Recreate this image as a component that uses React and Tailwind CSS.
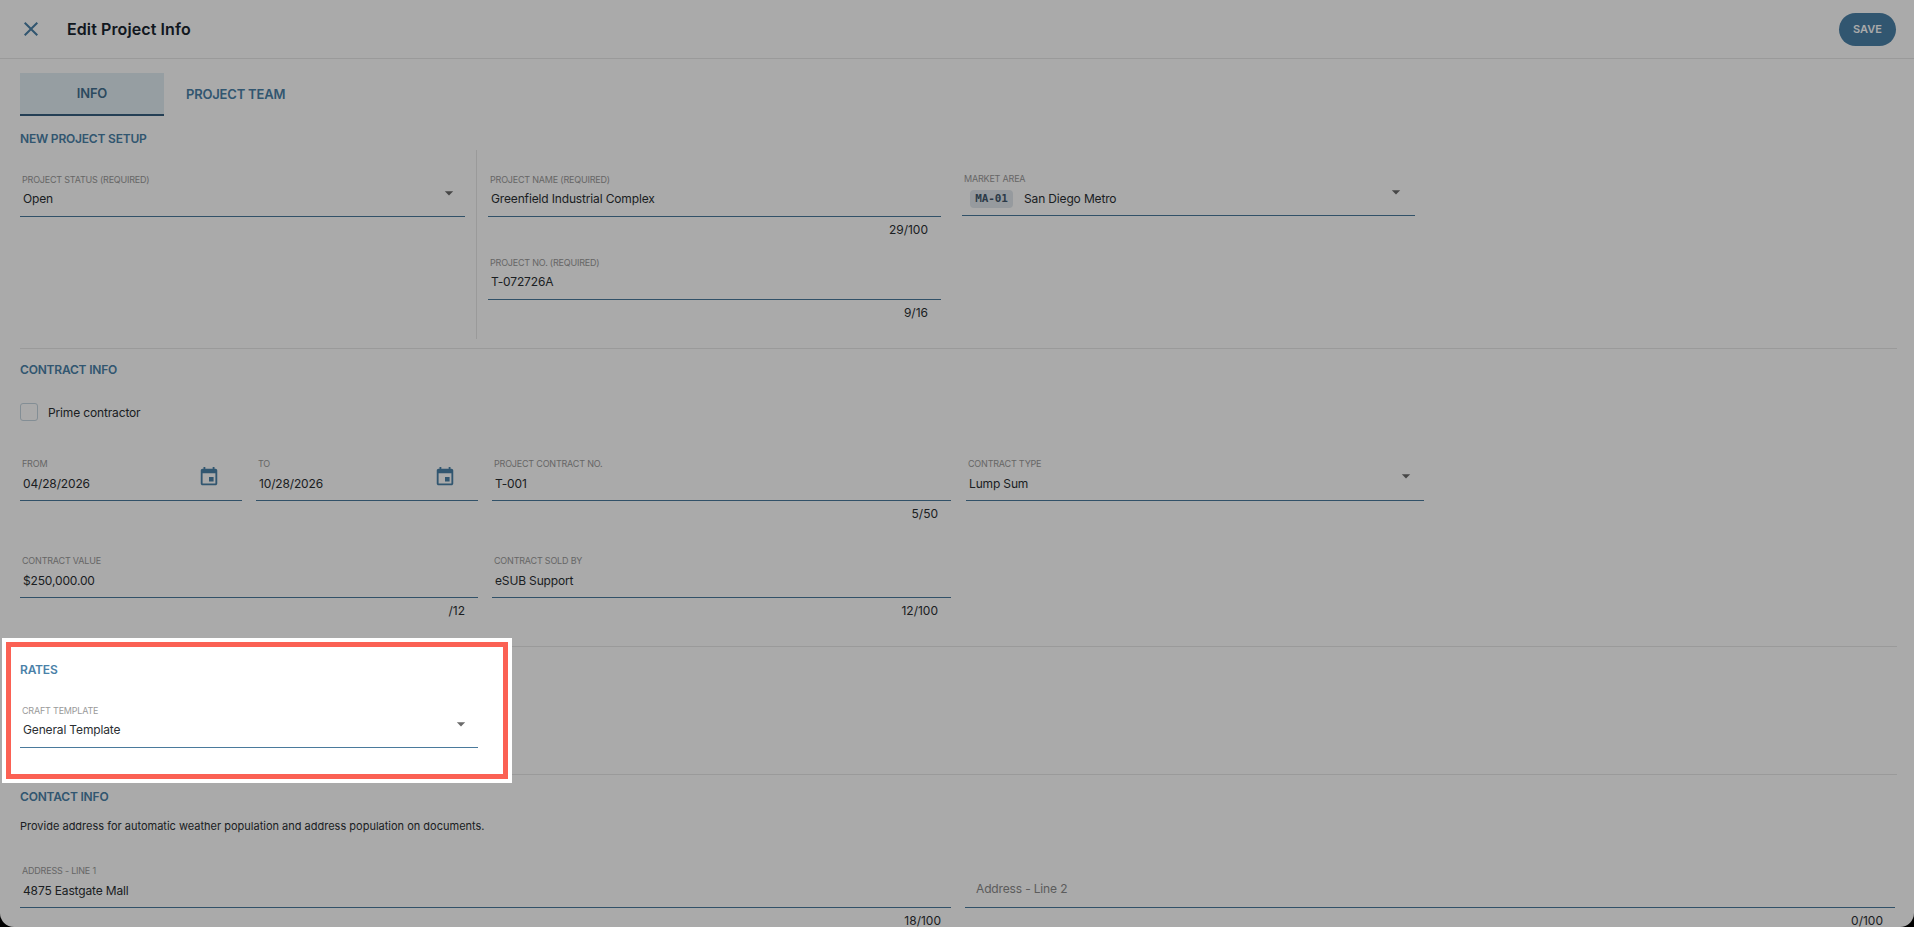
const blue = 'text-[#4a81a8]';

function Caret({ className }) {
  return (
    <svg viewBox="0 0 24 24" className={`w-5 h-5 shrink-0 fill-[#6b6b6b] ${className}`}>
      <path d="M7 10l5 5 5-5z" />
    </svg>
  );
}

function Calendar() {
  return (
    <svg viewBox="0 0 24 24" className="w-[22px] h-[22px] shrink-0 mt-[9px] mr-[22px] fill-[#4a81a8]">
      <path d="M17 12h-5v5h5v-5zM16 1v2H8V1H6v2H5c-1.11 0-1.99.9-1.99 2L3 19c0 1.1.89 2 2 2h14c1.1 0 2-.9 2-2V5c0-1.1-.9-2-2-2h-1V1h-2zm3 18H5V8h14v11z" />
    </svg>
  );
}

function Field({ label, value, width, children, right, valueClass = 'mt-[5px]' }) {
  return (
    <div className={`flex h-[44px] shrink-0 border-b border-[#4a7a9c] ${width}`}>
      <div className="flex-1 min-w-0">
        <div className="pl-0.5 pt-px text-[9px] leading-3 tracking-[-0.2px] uppercase text-[#9a9a9a]">{label}</div>
        <div className={`pl-[3px] text-xs leading-4 tracking-[-0.15px] text-[#2b2f33] ${valueClass}`}>{children || value}</div>
      </div>
      {right}
    </div>
  );
}

function Counter({ text, className }) {
  return <div className={`mt-[5px] text-right text-xs leading-4 text-[#2b2f33] ${className}`}>{text}</div>;
}

function Title({ children, className = '' }) {
  return <div className={`text-xs leading-4 font-semibold tracking-[-0.2px] uppercase ${blue} ${className}`}>{children}</div>;
}

function Divider({ className }) {
  return <div className={`h-px bg-[#e7e7e7] ${className}`} />;
}

export default function App() {
  return (
    <div className="relative h-[927px] overflow-hidden bg-black font-['Inter',sans-serif]">
      <div className="h-full bg-white rounded-b-[14px] overflow-hidden">
        <header className="flex items-center h-[59px] border-b border-[#e7e7e7] pl-[19px] pr-[18px]">
          <svg viewBox="0 0 24 24" className="w-6 h-6 fill-[#4a81a8]">
            <path d="M19 6.41 17.59 5 12 10.59 6.41 5 5 6.41 10.59 12 5 17.59 6.41 19 12 13.41 17.59 19 19 17.59 13.41 12z" />
          </svg>
          <h1 className="ml-6 text-base font-semibold tracking-[0.1px] text-[#18242f]">Edit Project Info</h1>
          <button className="ml-auto w-[57px] h-[33px] rounded-full bg-[#4a81a8] text-[11px] font-semibold text-white">SAVE</button>
        </header>

        <main className="pl-5 pr-[17px]">
          <nav className="flex mt-[14px] h-[43px]">
            <div className="flex items-center justify-center w-[144px] pt-px bg-[#e2edf4] border-b-2 border-[#365f80] text-[13px] font-semibold tracking-[-0.2px] text-[#42708f]">INFO</div>
            <div className={`flex items-center pl-[22px] pt-px text-[13px] font-semibold tracking-[-0.2px] ${blue}`}>PROJECT TEAM</div>
          </nav>

          <Title className="mt-[15px]">New project setup</Title>
          <section className="flex mt-[3px] h-[189px]">
            <div className="w-[457px] shrink-0 pt-[23px] border-r border-[#e7e7e7]">
              <Field label="Project status (required)" value="Open" width="w-[445px]" right={<Caret className="mt-2.5 mr-1.5" />} />
            </div>
            <div className="w-[453px] ml-[11px] shrink-0 pt-[23px]">
              <div className="h-[83px]">
                <Field label="Project name (required)" value="Greenfield Industrial Complex" width="w-full" />
                <Counter text="29/100" className="pr-[13px]" />
              </div>
              <Field label="Project no. (required)" value="T-072726A" width="w-full" />
              <Counter text="9/16" className="pr-[13px]" />
            </div>
            <div className="ml-[21px] pt-[22px]">
              <Field
                label="Market area"
                width="w-[453px]"
                valueClass="mt-[5px]"
                right={<Caret className="mt-2.5 mr-[9px]" />}
              >
                <div className="flex items-center pl-[5px]">
                  <span className="flex items-center justify-center w-[43px] h-[18px] rounded bg-[#e2e8ed] font-['DejaVu_Sans_Mono',monospace] text-[11px] font-bold text-[#42586c]">MA-01</span>
                  <span className="ml-[11px]">San Diego Metro</span>
                </div>
              </Field>
            </div>
          </section>

          <Divider className="mt-[9px]" />
          <Title className="mt-[13px]">Contract info</Title>
          <label className="flex items-center mt-[25px] h-[18px]">
            <span className="w-[18px] h-[18px] rounded-[3px] border border-[#c5d5e0]" />
            <span className="ml-[10px] pt-px text-xs tracking-[-0.15px] text-[#2b2f33]">Prime contractor</span>
          </label>

          <div className="flex mt-9 h-[97px]">
            <Field label="From" value="04/28/2026" width="w-[222px]" valueClass="mt-1.5" right={<Calendar />} />
            <Field label="To" value="10/28/2026" width="w-[222px] ml-[14px]" valueClass="mt-1.5" right={<Calendar />} />
            <div className="ml-[14px] w-[459px]">
              <Field label="Project contract no." value="T-001" width="w-full" valueClass="mt-1.5" />
              <Counter text="5/50" className="pr-[13px]" />
            </div>
            <Field label="Contract type" value="Lump Sum" width="w-[458px] ml-[15px]" valueClass="mt-1.5" right={<Caret className="mt-[9px] mr-2" />} />
          </div>

          <div className="flex h-[92px]">
            <div className="w-[458px]">
              <Field label="Contract value" value="$250,000.00" width="w-full" valueClass="mt-1.5" />
              <Counter text="/12" className="pr-[13px]" />
            </div>
            <div className="ml-[14px] w-[459px]">
              <Field label="Contract sold by" value="eSUB Support" width="w-full" valueClass="mt-1.5" />
              <Counter text="12/100" className="pr-[13px]" />
            </div>
          </div>

          <Divider />
          <Title className="mt-[15px]">Rates</Title>
          <Field label="Craft template" value="General Template" width="w-[458px] mt-[26px]" right={<Caret className="mt-2.5 mr-[7px]" />} />

          <Divider className="mt-[26px]" />
          <Title className="mt-[14px]">Contact info</Title>
          <p className="mt-[13px] text-[11px] leading-4 text-[#2b2f33]">Provide address for automatic weather population and address population on documents.</p>

          <div className="flex mt-[30px]">
            <div className="w-[931px]">
              <Field label="Address - Line 1" value="4875 Eastgate Mall" width="w-full" valueClass="mt-1.5" />
              <Counter text="18/100" className="pr-[10px]" />
            </div>
            <div className="ml-[14px] w-[930px]">
              <div className="h-[44px] border-b border-[#4a7a9c] pt-[17px] pl-[11px] text-xs leading-4 tracking-[-0.15px] text-[#8a8a8a]">Address - Line 2</div>
              <Counter text="0/100" className="pr-3" />
            </div>
          </div>
        </main>
      </div>

      {/* dimmed page with the highlighted rates block cut out */}
      <div className="absolute left-[2px] top-[638px] w-[510px] h-[145px] border-4 border-white shadow-[0_0_0_3000px_rgba(0,0,0,0.333)]">
        <div className="h-full border-[5px] border-[#fb6154]" />
      </div>
    </div>
  );
}
